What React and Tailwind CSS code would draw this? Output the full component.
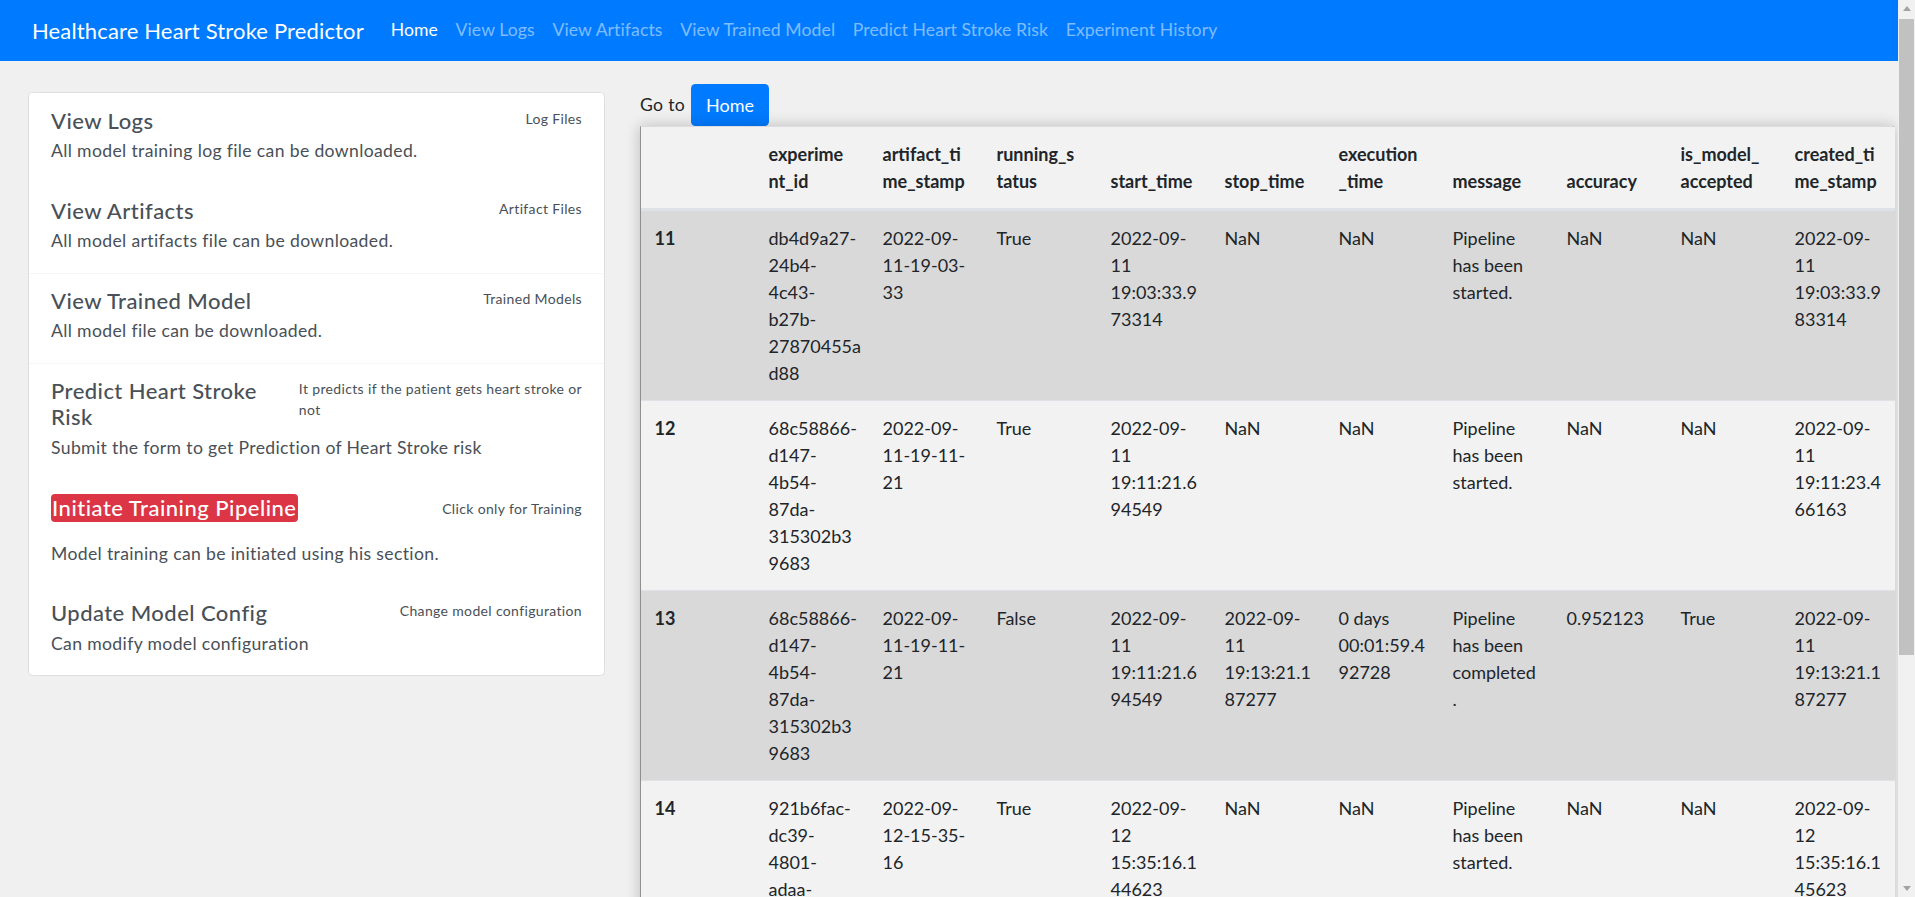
const navLinks = [
  "Home",
  "View Logs",
  "View Artifacts",
  "View Trained Model",
  "Predict Heart Stroke Risk",
  "Experiment History",
];

const headers = [
  [],
  ["experime", "nt_id"],
  ["artifact_ti", "me_stamp"],
  ["running_s", "tatus"],
  ["start_time"],
  ["stop_time"],
  ["execution", "_time"],
  ["message"],
  ["accuracy"],
  ["is_model_", "accepted"],
  ["created_ti", "me_stamp"],
];

const rows = [
  {
    dark: true,
    cells: [
      ["11"],
      ["db4d9a27-", "24b4-", "4c43-", "b27b-", "27870455a", "d88"],
      ["2022-09-", "11-19-03-", "33"],
      ["True"],
      ["2022-09-", "11", "19:03:33.9", "73314"],
      ["NaN"],
      ["NaN"],
      ["Pipeline", "has been", "started."],
      ["NaN"],
      ["NaN"],
      ["2022-09-", "11", "19:03:33.9", "83314"],
    ],
  },
  {
    dark: false,
    cells: [
      ["12"],
      ["68c58866-", "d147-", "4b54-", "87da-", "315302b3", "9683"],
      ["2022-09-", "11-19-11-", "21"],
      ["True"],
      ["2022-09-", "11", "19:11:21.6", "94549"],
      ["NaN"],
      ["NaN"],
      ["Pipeline", "has been", "started."],
      ["NaN"],
      ["NaN"],
      ["2022-09-", "11", "19:11:23.4", "66163"],
    ],
  },
  {
    dark: true,
    cells: [
      ["13"],
      ["68c58866-", "d147-", "4b54-", "87da-", "315302b3", "9683"],
      ["2022-09-", "11-19-11-", "21"],
      ["False"],
      ["2022-09-", "11", "19:11:21.6", "94549"],
      ["2022-09-", "11", "19:13:21.1", "87277"],
      ["0 days", "00:01:59.4", "92728"],
      ["Pipeline", "has been", "completed", "."],
      ["0.952123"],
      ["True"],
      ["2022-09-", "11", "19:13:21.1", "87277"],
    ],
  },
  {
    dark: false,
    cells: [
      ["14"],
      ["921b6fac-", "dc39-", "4801-", "adaa-", "7c0e1b5f2", "a61"],
      ["2022-09-", "12-15-35-", "16"],
      ["True"],
      ["2022-09-", "12", "15:35:16.1", "44623"],
      ["NaN"],
      ["NaN"],
      ["Pipeline", "has been", "started."],
      ["NaN"],
      ["NaN"],
      ["2022-09-", "12", "15:35:16.1", "45623"],
    ],
  },
];

function Lines({ lines }) {
  return (
    <>
      {lines.map((l, i) => (
        <div key={i} className="whitespace-nowrap">
          {l}
        </div>
      ))}
    </>
  );
}

function Item({ title, small, desc, border }) {
  return (
    <div
      className={
        border
          ? "border-t border-[#f6f6f6] px-[22px] pb-[13.7px] pt-[13.7px]"
          : "border-t border-white px-[22px] pb-[13.7px] pt-[13.7px]"
      }
    >
      <div className="flex items-start justify-between">
        <div className="mb-[4.4px] text-[22px] font-medium leading-[26.4px] tracking-[0.45px] text-[#495057]">
          <Lines lines={title} />
        </div>
        <div className="text-[14px] leading-[21px] tracking-[0.35px] text-[#495057]">
          <Lines lines={small} />
        </div>
      </div>
      <p className="mb-[4.4px] text-[17.6px] leading-[26.4px] tracking-[0.35px] text-[#495057]">{desc}</p>
    </div>
  );
}

export default function App() {
  return (
    <div className="flex h-[897px] w-[1915px] overflow-hidden bg-[#f0f0f0] font-['Lato',sans-serif] text-[#212529]">
      <div className="flex w-[1898px] flex-col">
        <nav className="flex h-[61px] shrink-0 items-center bg-[#007bff] pl-[32px]">
          <span className="mr-[18px] text-[22px] tracking-[0.15px] text-white">Healthcare Heart Stroke Predictor</span>
          <ul className="flex text-[17.6px] tracking-[0.1px]">
            {navLinks.map((l, i) => (
              <li key={l} className={i === 0 ? "px-[8.8px] text-white" : "px-[8.8px] text-white/50"}>
                {l}
              </li>
            ))}
          </ul>
        </nav>
        <div className="flex flex-1 items-start">
          <div className="ml-[28px] mt-[31px] w-[577px] overflow-hidden rounded-[4.4px] border border-[#dedede] bg-white">
            <Item title={["View Logs"]} small={["Log Files"]} desc="All model training log file can be downloaded." />
            <Item title={["View Artifacts"]} small={["Artifact Files"]} desc="All model artifacts file can be downloaded." />
            <Item title={["View Trained Model"]} small={["Trained Models"]} desc="All model file can be downloaded." border />
            <Item
              title={["Predict Heart Stroke", "Risk"]}
              small={["It predicts if the patient gets heart stroke or", "not"]}
              desc="Submit the form to get Prediction of Heart Stroke risk"
              border
            />
            <div className="border-t border-white px-[22px] pb-[13.7px] pt-[13.7px]">
              <div className="flex items-start justify-between">
                <div className="rounded-[4px] bg-[#dc3545] px-[1px] text-[22px] font-medium leading-[28px] tracking-[0.5px] text-white">
                  Initiate Training Pipeline
                </div>
                <div className="mt-[4px] text-[14px] leading-[21px] tracking-[0.35px] text-[#495057]">
                  Click only for Training
                </div>
              </div>
              <p className="mb-[4.4px] mt-[19px] text-[17.6px] leading-[26.4px] tracking-[0.35px] text-[#495057]">
                Model training can be initiated using his section.
              </p>
            </div>
            <Item title={["Update Model Config"]} small={["Change model configuration"]} desc="Can modify model configuration" />
          </div>
          <div className="ml-[35px] mt-[23px] flex flex-col">
            <div className="flex h-[42px] items-center">
              <span className="text-[17.6px] tracking-[0.3px]">Go to</span>
              <span className="ml-[6px] flex h-[42px] items-center rounded-[4.4px] bg-[#007bff] px-[15px] text-[18px] text-white">
                Home
              </span>
            </div>
            <div className="w-[1254px] border-x border-t border-x-[#8f8f8f] border-t-[#dcdce0] shadow-[0_0_14px_rgba(0,0,0,0.22)]">
              <table className="w-[1252px] table-fixed border-collapse text-[18px] leading-[27px] text-[#212529]">
                <thead>
                  <tr className="bg-[#f2f2f2]">
                    {headers.map((h, i) => (
                      <th
                        key={i}
                        className="w-[114px] border-b-[3px] border-[#dee2e6] px-[13.5px] py-[13.5px] text-left align-bottom font-bold"
                      >
                        <Lines lines={h} />
                      </th>
                    ))}
                  </tr>
                </thead>
                <tbody>
                  {rows.map((r, ri) => (
                    <tr key={ri} className={r.dark ? "bg-[#d9d9d9]" : "bg-[#f2f2f2]"}>
                      {r.cells.map((c, ci) => (
                        <td
                          key={ci}
                          className={
                            ci === 0
                              ? "border-t border-[#dee2e6] px-[13.5px] py-[13.5px] align-top font-bold"
                              : "border-t border-[#dee2e6] px-[13.5px] py-[13.5px] align-top"
                          }
                        >
                          <Lines lines={c} />
                        </td>
                      ))}
                    </tr>
                  ))}
                </tbody>
              </table>
            </div>
          </div>
        </div>
      </div>
      <div className="flex h-[897px] w-[17px] flex-col bg-[#f1f1f1]">
        <div className="flex h-[17px] items-center justify-center">
          <div className="h-0 w-0 border-x-[4.5px] border-b-[5px] border-x-transparent border-b-[#a3a3a3]"></div>
        </div>
        <div className="ml-[1px] mr-[1px] mt-[2px] h-[636px] bg-[#c1c1c1]"></div>
        <div className="flex-1"></div>
        <div className="flex h-[17px] items-center justify-center">
          <div className="h-0 w-0 border-x-[4.5px] border-t-[5px] border-x-transparent border-t-[#a3a3a3]"></div>
        </div>
      </div>
    </div>
  );
}
